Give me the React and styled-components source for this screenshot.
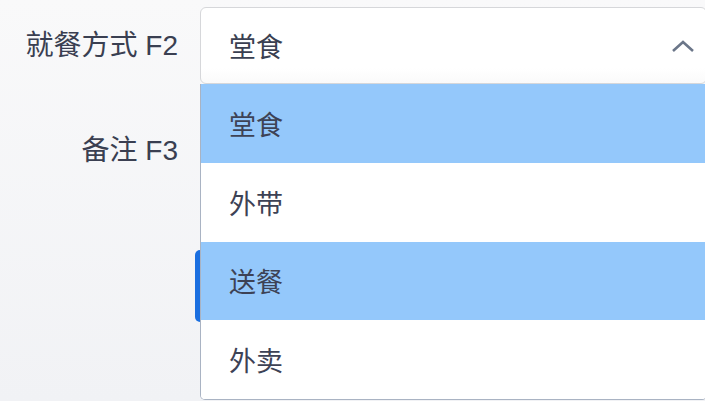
import React from 'react'
import styled, { createGlobalStyle } from 'styled-components'

const GlobalStyle = createGlobalStyle`
  html, body {
    margin: 0;
    height: 100%;
  }
  body {
    background: linear-gradient(180deg, #f9f9fa 0%, #f1f2f5 100%);
    font-family: "Liberation Sans", "Noto Sans CJK SC", sans-serif;
    color: #3a3f51;
    overflow: hidden;
  }
`

const Form = styled.form`
  display: flex;
  flex-direction: column;
  gap: 22px;
  padding-top: 7px;
  width: 705px;
  height: 401px;
  box-sizing: border-box;
`

const Row = styled.div`
  display: grid;
  grid-template-columns: 178px 1fr;
  column-gap: 22px;
  align-items: ${(p) => (p.$top ? 'start' : 'center')};
`

const Label = styled.label`
  text-align: right;
  font-size: 28px;
  line-height: 38px;
  color: #3a3f51;
  padding-top: ${(p) => p.$pad || 0}px;
  white-space: nowrap;
`

const SelectWrap = styled.div`
  position: relative;
  margin-right: -2px;
`

const SelectBox = styled.div`
  height: 77px;
  box-sizing: border-box;
  border: 1px solid #d6d7da;
  border-radius: 6px;
  background: linear-gradient(180deg, #ffffff 80%, #fafafa 100%);
  display: flex;
  align-items: center;
  justify-content: space-between;
  padding: 0 10px 0 28px;
  font-size: 27px;
  color: #3a3f51;
`

const Dropdown = styled.ul`
  position: absolute;
  top: 77px;
  left: 0;
  right: 0;
  margin: 0;
  padding: 0;
  list-style: none;
  background: #fff;
  border: 1px solid #a9b3c3;
  border-top: none;
  border-radius: 0 0 5px 5px;
  z-index: 10;
  overflow: hidden;
`

const Option = styled.li`
  height: 78.75px;
  display: flex;
  align-items: center;
  padding-left: 28px;
  font-size: 27px;
  color: #3d4255;
  background: ${(p) => (p.$active ? '#94c8fb' : '#ffffff')};
`

const Textarea = styled.div`
  height: 120px;
  border: 1px solid #d6d7da;
  border-radius: 6px;
  background: #fff;
`

const Actions = styled.div`
  padding-left: 195px;
`

const Button = styled.button`
  width: 160px;
  height: 72px;
  border: none;
  border-radius: 5px;
  background: #1b6fe0;
`

const Chevron = () => (
  <svg width="26" height="16" viewBox="0 0 26 16">
    <polyline points="3,13 13,4 23,13" fill="none" stroke="#6b7689" strokeWidth="2.6" />
  </svg>
)

const options = ['堂食', '外带', '送餐', '外卖']
const highlighted = ['堂食', '送餐']

const App = () => {
  return (
    <>
      <GlobalStyle />
      <Form>
        <Row>
          <Label>就餐方式 F2</Label>
          <SelectWrap>
            <SelectBox>
              <span>堂食</span>
              <Chevron />
            </SelectBox>
            <Dropdown>
              {options.map((o) => (
                <Option key={o} $active={highlighted.includes(o)}>
                  {o}
                </Option>
              ))}
            </Dropdown>
          </SelectWrap>
        </Row>

        <Row $top>
          <Label $pad={26}>备注 F3</Label>
          <Textarea />
        </Row>

        <Actions>
          <Button type="button" aria-label="提交" />
        </Actions>
      </Form>
    </>
  )
}

export default App
